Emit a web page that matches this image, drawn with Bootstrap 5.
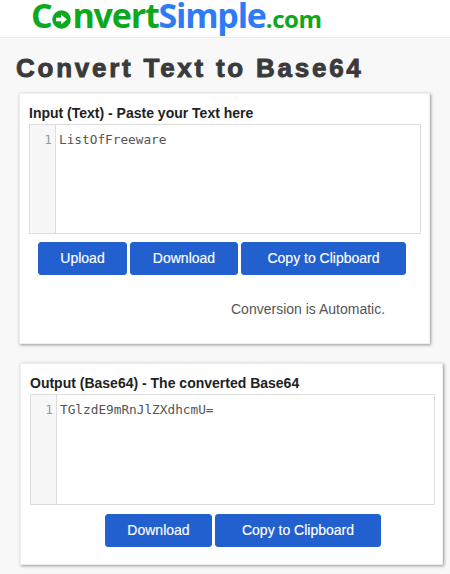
<!DOCTYPE html>
<html lang="en">
<head>
<meta charset="utf-8">
<title>Convert Text to Base64</title>
<link href="https://cdn.jsdelivr.net/npm/bootstrap@5.3.0/dist/css/bootstrap.min.css" rel="stylesheet">
<style>
html,body{height:574px;overflow:hidden}
body{background:#f8f8f8;font-family:"Liberation Sans",Arial,sans-serif;color:#111}
.site-top{height:38px;background:#fff;border-bottom:1px solid #e9e9e9;padding-left:31px}
.logo-text{font-family:"Open Sans",sans-serif;font-weight:700;font-size:34px;line-height:30px;height:37px;letter-spacing:-1.2px;white-space:nowrap;color:#0ca81e}
.logo-blue{color:#2f7bf6}
.logo-dom{font-size:24px;letter-spacing:-.4px}
.logo-o{width:19px;height:19px;margin:0 1px 0 1px;vertical-align:-1px}
.page-title{font-family:"Liberation Sans",Arial,sans-serif;font-weight:700;font-size:26px;line-height:30px;letter-spacing:2.75px;color:#3a3a3a;margin:15px 0 10px 16px;-webkit-text-stroke:.9px #3a3a3a}
.tool-box{background:#fff;box-shadow:1px 1px 3px rgba(0,0,0,.4);border:1px solid #eee;border-radius:0}
.box-a{width:411px;height:251px;margin-left:19px;padding:10px 8px 0 9px}
.box-b{width:423px;height:202px;margin:19px 0 0 20px;padding:10px 8px 0 9px}
.box-label{font-size:14px;line-height:18px;font-weight:700;color:#222;margin:0 0 2px;display:block;white-space:nowrap}
.code-pane{display:flex;border:1px solid #ddd;height:110px;background:#fff}
.box-b .code-pane{height:111px;width:405px}
.pane-gutter{width:26px;background:#f7f7f7;border-right:1px solid #ddd;text-align:right;padding:7px 3px 0 0;font-family:"DejaVu Sans Mono",monospace;font-size:12.75px;line-height:16px;color:#999}
.pane-text{padding:7px 0 0 3px;font-family:"DejaVu Sans Mono",monospace;font-size:12.75px;line-height:16px;color:#555}
.tool-row{display:flex;gap:3px;margin-top:8px}
.box-a .tool-row{padding-left:9px;gap:3px}
.box-b .tool-row{padding-left:75px;margin-top:9px}
.tool-btn{background:#2360cf;border:1px solid #2360cf;color:#fff;font-size:14px;line-height:20px;height:33px;padding:4px 0 6px;border-radius:3px;-webkit-text-stroke:.15px #fff}
.tool-btn:hover{background:#2360cf;color:#fff;border-color:#2360cf}
.w-up{width:89px}.w-dl{width:108px}.w-cp{width:165px}
.box-b .w-dl{width:107px}.box-b .w-cp{width:166px}
.auto-note{font-size:14px;line-height:18px;color:#555;margin:25px 0 0 202px}
</style>
</head>
<body>
<header class="site-top">
  <div class="logo-text">C<svg class="logo-o" viewBox="0 0 21 21" aria-hidden="true"><circle cx="10.5" cy="10.5" r="10.2" fill="#0ca81e"/><rect x="4.5" y="8.5" width="6" height="4" fill="#fff"/><path d="M10 5 16.5 10.5 10 16Z" fill="#fff"/></svg>nvert<span class="logo-blue">Simple</span><span class="logo-dom">.com</span></div>
</header>
<main>
  <h1 class="page-title">Convert Text to Base64</h1>
  <section class="tool-box box-a">
    <label class="box-label">Input (Text) - Paste your Text here</label>
    <div class="code-pane"><div class="pane-gutter">1</div><div class="pane-text">ListOfFreeware</div></div>
    <div class="tool-row">
      <button class="btn tool-btn w-up" type="button">Upload</button>
      <button class="btn tool-btn w-dl" type="button">Download</button>
      <button class="btn tool-btn w-cp" type="button">Copy to Clipboard</button>
    </div>
    <p class="auto-note">Conversion is Automatic.</p>
  </section>
  <section class="tool-box box-b">
    <label class="box-label">Output (Base64) - The converted Base64</label>
    <div class="code-pane"><div class="pane-gutter">1</div><div class="pane-text">TGlzdE9mRnJlZXdhcmU=</div></div>
    <div class="tool-row">
      <button class="btn tool-btn w-dl" type="button">Download</button>
      <button class="btn tool-btn w-cp" type="button">Copy to Clipboard</button>
    </div>
  </section>
</main>
<script src="https://cdn.jsdelivr.net/npm/bootstrap@5.3.0/dist/js/bootstrap.bundle.min.js"></script>
</body>
</html>
